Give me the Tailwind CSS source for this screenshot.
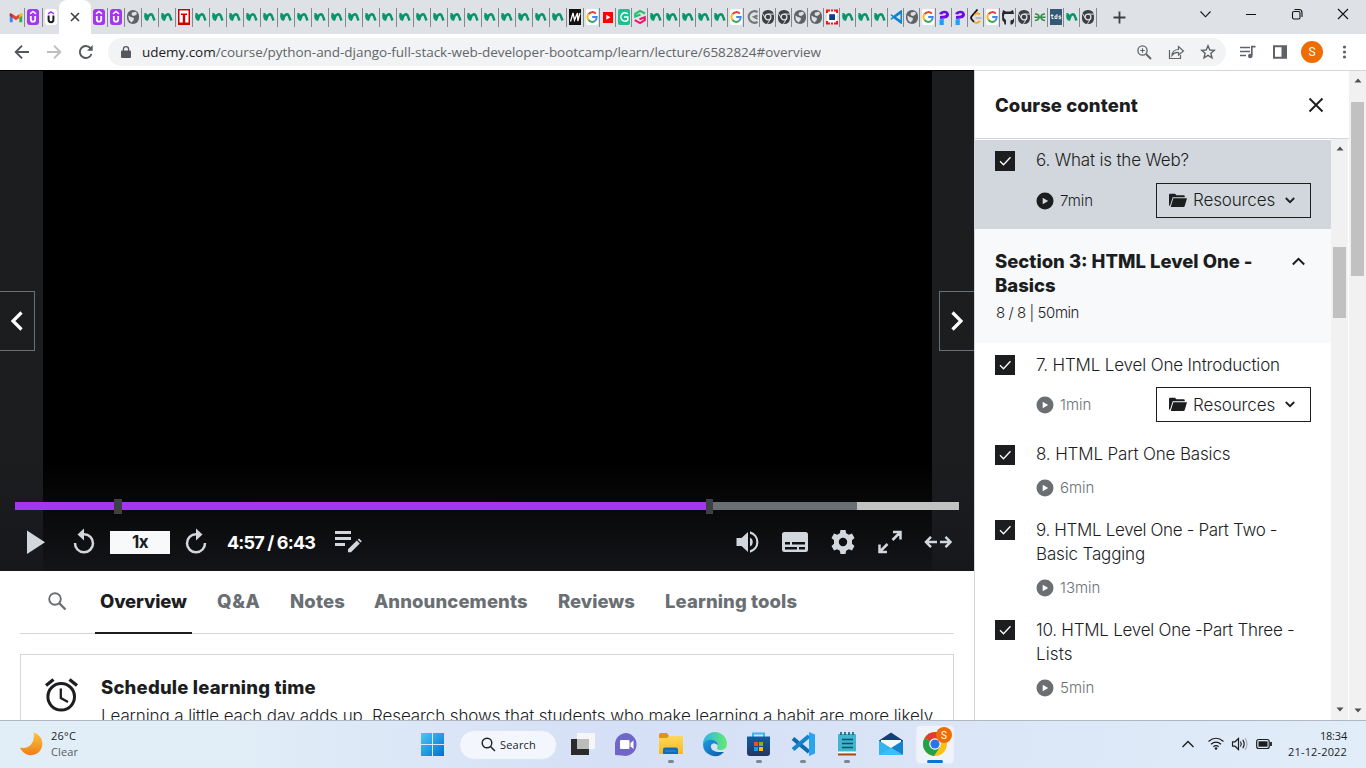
<!DOCTYPE html>
<html lang="en">
<head>
<meta charset="utf-8">
<title>Python and Django Full Stack Web Developer Bootcamp</title>
<script src="https://cdn.jsdelivr.net/npm/@tailwindcss/browser@4"></script>
</head>
<body class="w-[1366px] h-[768px] overflow-hidden bg-white font-['Inter','Liberation_Sans',sans-serif] text-[#1c1d1f]">

<svg class="hidden">
  <defs>
    <symbol id="n" viewBox="0 0 12 16"><path d="M.5 5.500Q1.500 5 2.300 6 2.800 7.500 3.500 9 5 5.500 6.800 5.300 8.500 5.200 9.300 8.500L10.500 11.500" fill="none" stroke="#059669" stroke-width="2.400"/><path d="M1 6Q1 11 3.300 10.800L4.500 8" fill="none" stroke="#059669" stroke-width="1.800"/></symbol>
    <symbol id="gm" viewBox="0 0 14 16"><path d="M.8 13.2V4.5L3.7 6.600V13.200z" fill="#4285f4"/><path d="M10.300 13.200V6.600L13.200 4.500V13.200z" fill="#34a853"/><path d="M.8 4.200 3.700 5V9L.8 6.800z" fill="#c5221f"/><path d="M3.500 4.900 7 7.500 10.500 4.900V8.700L7 11.300 3.500 8.700z" fill="#ea4335"/><path d="M10.300 5 13.200 4.200V6.800L10.300 9z" fill="#fbbc04"/></symbol>
    <symbol id="ud" viewBox="0 0 12 16"><rect width="12" height="16" rx="3" fill="#a435f0"/><path d="M3 4.800 6 2.500 9 4.800" fill="none" stroke="#fff" stroke-width="1.500"/><path d="M3.800 7V10.500A2.200 2.200 0 0 0 8.200 10.500V7" fill="none" stroke="#fff" stroke-width="1.800"/></symbol>
    <symbol id="uw" viewBox="0 0 12 16"><rect width="12" height="16" rx="3" fill="#fff"/><path d="M3 4.800 6 2.800 9 4.800" fill="none" stroke="#a435f0" stroke-width="1.400"/><path d="M3.600 6.500V10.800A2.400 2.400 0 0 0 8.400 10.800V6.500" fill="none" stroke="#1c1d1f" stroke-width="2"/></symbol>
    <symbol id="gl" viewBox="0 0 12 16"><rect y="1" width="12" height="14" rx="6" fill="#5f6368"/><path d="M5 3.500 9 2.800 10 5 8 6.500 6 7 4.500 5.500zM1.200 6.500 4 8 7 9 6.500 11.500 4.500 13.500 2 11zM8.500 9.500 11 8.500" fill="#dee1e6"/></symbol>
    <symbol id="t" viewBox="0 0 12 16"><path d="M0 0H12V16H0z" fill="#c00"/><path d="M1.500 1.500H10.500V4.500H1.500zM1.500 6H4.800V13.500H1.500zM7.200 6H10.500V13.500H7.200zM1.500 4.500H3V6H1.500zM9 4.500H10.500V6H9z" fill="#fff"/></symbol>
    <symbol id="m" viewBox="0 0 12 16"><path d="M0 0H12V16H0z" fill="#12100e"/><path d="M1.500 12.500 4 4 5.500 11 8.500 4 8.800 12 11 4" fill="none" stroke="#fff" stroke-width="1.300"/></symbol>
    <symbol id="g" viewBox="0 0 12 16"><rect width="12" height="16" rx="2" fill="#fff"/><g fill="none" stroke-width="2"><path d="M9.800 4.700A4.800 5 0 0 0 2.400 5.200" stroke="#ea4335"/><path d="M2.400 5.200A5 5 0 0 0 2.400 10.800" stroke="#fbbc04"/><path d="M2.400 10.800A4.700 5 0 0 0 9.200 11.800" stroke="#34a853"/><path d="M9.200 11.800A5 5 0 0 0 10.700 8H6.200" stroke="#4285f4"/></g></symbol>
    <symbol id="yt" viewBox="0 0 12 16"><path d="M1 3H11V14H1z" fill="#f00"/><path d="M4.300 5.800 8.500 8.300 4.300 10.800z" fill="#fff"/></symbol>
    <symbol id="gt" viewBox="0 0 12 16"><rect width="12" height="16" rx="2" fill="#1fbf92"/><path d="M9.800 5A4 4.300 0 1 0 9.800 11V8H6" fill="none" stroke="#fff" stroke-width="1.500"/></symbol>
    <symbol id="pk" viewBox="0 0 12 16"><path d="M11 4.500 6 1.800 1.200 4.800V7.500L6.500 5.500" fill="none" stroke="#21c063" stroke-width="2"/><path d="M.8 11.200 6 14.200 10.800 11.200V8.200L5.500 10.300" fill="none" stroke="#f0146e" stroke-width="2"/></symbol>
    <symbol id="cg" viewBox="0 0 12 16"><path d="M11.500 3A5.800 5.800 0 1 0 11.500 13" fill="none" stroke="#777" stroke-width="2.200"/><path d="M11.500 6.500 8 8 11.500 10" fill="none" stroke="#777" stroke-width="2"/></symbol>
    <symbol id="cr" viewBox="0 0 12 16"><rect y="1" width="12" height="14" rx="5.500" fill="#3c4043"/><circle cx="6" cy="8" r="2.900" fill="none" stroke="#dee1e6" stroke-width="1.300"/><path d="M6 5.100H12M3.400 9.500.5 4.500M8.500 9.500 5.500 14.800" stroke="#dee1e6"/></symbol>
    <symbol id="rq" viewBox="0 0 12 16"><path d="M1 1H11V15H1z" fill="#fff"/><path d="M1 4V1.500H4M5 1.500H7M8 1.500H11V4M1 12V14.500H4M5 14.500H7M8 14.500H11V12" fill="none" stroke="#f11" stroke-width="2"/><path d="M3.200 5.200H9V11H3.200z" fill="#0b3d91"/></symbol>
    <symbol id="vs" viewBox="0 0 12 16"><path d="M10.500 1.500 12 1V15L10.500 14.500 3.500 9.300 1.500 10.800.3 10 2.500 8 .3 6 1.500 5.200 3.500 6.700zM10.500 5 6 8 10.500 11z" fill="#0a84d0" fill-rule="evenodd"/></symbol>
    <symbol id="p" viewBox="0 0 12 16"><path d="M1 5C3 .5 11 .5 11 5.500 11 9 7.500 9.500 6 9.500L2 10V7C6 6.500 8 6.500 8 5.200 8 3.500 5 4 4 5.500z" fill="#6d0be0"/><path d="M1.500 10.500C4 10.500 5.800 9 5.800 9V16H1.500z" fill="#1ca0ff"/></symbol>
    <symbol id="lc" viewBox="0 0 12 16"><path d="M7.500.5 1.500 7.500Q.5 9 1.800 10.500L4 12.800" fill="none" stroke="#111" stroke-width="1.800"/><path d="M9.800 5.500Q7 3 4.500 6M4 12.800Q7 15.500 10 11.800" fill="none" stroke="#ffa116" stroke-width="1.800"/><path d="M5.500 9H11.500" stroke="#b3b3b3" stroke-width="1.600"/></symbol>
    <symbol id="gh" viewBox="0 0 12 16"><path d="M1 1 4 2.500H8L11 1 12 5V9Q11.500 11 8.500 11.500V15.500H10Q12 14 12 12V5L9.500 5H2.500Q1.500 7 2 8.500 2.500 10 4 11V15.500H2.500L2 13 .3 11.500 0 5z" fill="#24292f"/></symbol>
    <symbol id="gf" viewBox="0 0 12 16"><path d="M1 5Q5 5 5 8T1 11.500M11 5Q7 5 7 8T11 11.500M.5 8.200H11.500" fill="none" stroke="#2f8d46" stroke-width="1.500"/></symbol>
    <symbol id="td" viewBox="0 0 12 16"><path d="M0 0H12V16H0z" fill="#355876"/><path d="M2 5V9.500H3.500M.8 6.500H3.500M7 5V9.500H5V7H7M11 7H9V8.200H10.800V9.700H8.600" fill="none" stroke="#fff" stroke-width=".9"/></symbol>
    <symbol id="play" viewBox="0 0 18 18"><circle cx="9" cy="9" r="8.500" fill="currentColor"/><path d="M6.700 5.800 12.200 9 6.700 12.200z" class="fill-[var(--k,#fff)]"/></symbol>
    <symbol id="chk" viewBox="0 0 20 20"><path d="M0 0H20V20H0z" fill="#1c1d1f"/><path d="M5 10.300 8.500 13.700 15.500 6.300" fill="none" stroke="#fff" stroke-width="1.300"/></symbol>
    <symbol id="fold" viewBox="0 0 18 15"><path d="M0 13V2Q0 .8 1.200.8H6L7.500 2.300H14.500Q15.800 2.300 15.800 3.500V4.300H3.700L1.200 12z" fill="#1c1d1f"/><path d="M4.300 5.300H18L15.800 12.800Q15.500 14 14.300 14H1.700z" fill="#1c1d1f"/></symbol>
    <symbol id="dn" viewBox="0 0 10 7"><path d="M.8 1 5 5.200 9.200 1" fill="none" stroke="#1c1d1f" stroke-width="1.800"/></symbol>
  </defs>
</svg>

<div class="w-[1366px] h-[768px] flex flex-col">

<!-- Tab strip -->
<header class="h-[34px] shrink-0 bg-[#dee1e6] flex">
  <div class="flex w-[59px] pl-[8px]" id="tabs-a"></div>
  <div class="w-[32px] h-[34px] bg-white rounded-t-[8px] flex items-center justify-center">
    <svg class="w-[10px] h-[10px]" viewBox="0 0 10 10"><path d="M1 1 9 9M9 1 1 9" stroke="#3c4043" stroke-width="1.600"/></svg>
  </div>
  <div class="flex w-[1006px]" id="tabs-b"></div>
  <svg class="w-[13px] h-[13px] mt-[11px] ml-[16px]" viewBox="0 0 13 13"><path d="M6.500.5V12.500M.5 6.500H12.500" stroke="#3c4043" stroke-width="1.800"/></svg>
  <svg class="w-[150px] h-[34px] ml-[73px]" viewBox="0 0 150 34" fill="none" stroke="#111" stroke-width="1.100"><path d="M1.500 11.500 6.500 16.800 11.500 11.500M47 14.500H57M95.500 9.500H100Q103 9.500 103 12.500V17"/><rect x="93.500" y="11.500" width="7.500" height="7.500" rx="1.500"/><path d="M139 9 149 19M149 9 139 19"/></svg>
</header>

<!-- Address bar -->
<div class="h-[36px] shrink-0 bg-white flex items-center">
  <svg class="w-[108px] h-[36px]" viewBox="0 0 108 36" fill="none" stroke-width="1.900"><path d="M29 18H16M22 11.700 15.700 18 22 24.300" stroke="#54585d"/><path d="M47 18H60M54 11.700 60.300 18 54 24.300" stroke="#bcbec2"/><path d="M91.500 20A6 6 0 1 1 90.500 14.200" stroke="#54585d"/><path d="M92.700 11V16.700H87z" fill="#54585d"/></svg>
  <div class="w-[1118px] h-[28px] rounded-full bg-[#f1f3f4] flex items-center pl-[13px]">
    <svg class="w-[10px] h-[13px]" viewBox="0 0 10 13"><path d="M1 4.500H9Q10 4.500 10 5.500V11Q10 12 9 12H1Q0 12 0 11V5.500Q0 4.500 1 4.500z" fill="#54585d"/><path d="M2.400 5V3.200A2.600 2.500 0 0 1 7.600 3.200V5" fill="none" stroke="#54585d" stroke-width="1.300"/></svg>
    <div class="ml-[11px] w-[994px] font-['Open_Sans',sans-serif] text-[13.5px] tracking-[-0.043px] text-[#62666b] whitespace-nowrap"><span class="text-[#202124]">udemy.com</span>/course/python-and-django-full-stack-web-developer-bootcamp/learn/lecture/6582824#overview</div>
    <svg class="w-[80px] h-[28px]" viewBox="0 0 80 28" fill="none" stroke="#5f6368" stroke-width="1.300"><circle cx="6.500" cy="12.500" r="4.600"/><path d="M10 16 15 21" stroke-width="1.800"/><path d="M4.300 12.500H8.700M6.500 10.300V14.700" stroke-width="1.100"/><path d="M33.500 12V20.500H44.500V17M36 17.500Q36.500 11.500 42.500 11.500V8.500L47.500 13 42.500 17V14.500Q38.500 14 36 17.500z" stroke-width="1.200"/><path d="M72 7.800 73.800 12 78.300 12.300 74.900 15.200 76 19.800 72 17.400 68 19.800 69.100 15.200 65.700 12.300 70.200 12z" stroke-width="1.400"/></svg>
  </div>
  <svg class="w-[62px] h-[36px] ml-[12px]" viewBox="0 0 62 36"><path d="M2 13.500H12M2 17.500H12M2 21.500H8" stroke="#5f6368" stroke-width="1.700"/><path d="M13.800 21.500V12.700H17.500" fill="none" stroke="#5f6368" stroke-width="1.700"/><circle cx="12.300" cy="22" r="2.300" fill="#5f6368"/><path d="M35 11.200H49V24.800H35zM37 13.200V22.800H43.500V13.200z" fill="#5f6368" fill-rule="evenodd"/></svg>
  <div class="w-[22px] h-[22px] rounded-full bg-[#ef6c00] text-white text-[12px] flex items-center justify-center font-[Roboto,sans-serif] ml-[1px]">S</div>
  <svg class="w-[5px] h-[14px] ml-[19px]" viewBox="0 0 5 14" fill="#5f6368"><circle cx="2.500" cy="2" r="1.600"/><circle cx="2.500" cy="7" r="1.600"/><circle cx="2.500" cy="12" r="1.600"/></svg>
</div>

<!-- Page -->
<main class="h-[650px] shrink-0 flex overflow-hidden">
  <section class="w-[974px] shrink-0 flex flex-col">
    <!-- Player -->
    <div class="h-[501px] shrink-0 bg-[#1c1d1f] border-t border-black px-[43px] relative">
      <div class="h-full w-[889px] bg-black"></div>
      <div class="absolute inset-x-0 bottom-0 h-[110px] bg-linear-to-b from-[#16171b]/0 to-[#16171b]/90"></div>
      <div class="absolute left-0 top-[220px] w-[35px] h-[60px] bg-[#1c1d1f] border border-l-0 border-[#6a6f73] flex items-center justify-center"><svg class="w-[12px] h-[20px]" viewBox="0 0 12 20"><path d="M10.500 1.500 2 10 10.500 18.500" fill="none" stroke="#fff" stroke-width="3.200"/></svg></div>
      <div class="absolute right-0 top-[220px] w-[35px] h-[60px] bg-[#1c1d1f] border border-r-0 border-[#6a6f73] flex items-center justify-center"><svg class="w-[12px] h-[20px]" viewBox="0 0 12 20"><path d="M1.500 1.500 10 10 1.500 18.500" fill="none" stroke="#fff" stroke-width="3.200"/></svg></div>
      <div class="absolute left-[15px] top-[428px] w-[944px] h-[15px] flex">
        <div class="w-[99px] h-[8px] mt-[3px] bg-[#a435f0]"></div><div class="w-[8px] h-[15px] bg-[#3e4143]"></div><div class="w-[584px] h-[8px] mt-[3px] bg-[#a435f0]"></div><div class="w-[7px] h-[15px] bg-[#3e4143]"></div><div class="w-[144px] h-[8px] mt-[3px] bg-[#6a6f73]"></div><div class="w-[102px] h-[8px] mt-[3px] bg-[#c1c2c2]"></div>
      </div>
      <div class="absolute left-0 bottom-0 w-full h-[58px] flex items-center text-[#d1d7dc]">
        <svg class="w-[110px] h-[58px]" viewBox="0 0 110 58"><path d="M27 17.500V41L45 29.200z" fill="currentColor"/><path d="M75 30A9 9 0 1 0 84 21.300H81" fill="none" stroke="currentColor" stroke-width="2.500"/><path d="M77.500 21.500 84 15.500V27.500z" fill="currentColor"/></svg>
        <div class="w-[60px] h-[23px] bg-[#f7f9fa] text-[#1c1d1f] font-bold text-[17px] tracking-[-0.6px] leading-[23px] text-center">1x</div>
        <svg class="w-[57px] h-[58px]" viewBox="0 0 57 58"><path d="M35 30A9 9 0 1 1 26 21.300H29" fill="none" stroke="currentColor" stroke-width="2.500"/><path d="M32.500 21.500 26 15.500V27.500z" fill="currentColor"/></svg>
        <div class="w-[107px] text-white font-bold text-[18px] tracking-[-0.83px] whitespace-nowrap pt-px">4:57 / 6:43</div>
        <svg class="w-[28px] h-[22px]" viewBox="0 0 28 22" fill="currentColor"><path d="M1 0H17V3H1zM1 6H17V9H1zM1 12H11V15H1zM14 18.300 22.800 9.500 25.800 12.500 17 21.300H14zM23.700 8.700 25 7.500 27.800 10.300 26.600 11.500z"/></svg>
        <svg class="w-[612px] h-[58px]" viewBox="362 0 612 58" fill="currentColor"><path d="M736.500 25H741.500L748 19V39L741.500 33H736.500zM750 24.500A5 5 0 0 1 750 33.500zM750 18.300A11 11 0 0 1 750 39.700V37.200A8.500 8.500 0 0 0 750 20.800z"/><path fill-rule="evenodd" d="M784.500 19H805.500Q808 19 808 21.500V36.500Q808 39 805.500 39H784.500Q782 39 782 36.500V21.500Q782 19 784.500 19zM785 29V31.500H790V29zM792 29V31.500H805V29zM785 34V36.500H797V34zM799 34V36.500H805V34z"/><path fill-rule="evenodd" d="M840.500 17H845.500L846.200 20.300 848.800 21.700 852 20.600 854.500 25 852 27.300V30.700L854.500 33 852 37.400 848.800 36.300 846.200 37.700 845.500 41H840.500L839.800 37.700 837.200 36.300 834 37.400 831.500 33 834 30.700V27.300L831.500 25 834 20.600 837.200 21.700 839.800 20.300zM843 24.800A4.200 4.200 0 1 0 843 33.200 4.200 4.200 0 1 0 843 24.800z"/><g fill="none" stroke="currentColor" stroke-width="2.500"><path d="M893 19H900.500V26.500M900 19.500 892.500 27M879.500 31.500V39H887M880 38.500 887.500 31M937 29H927M931 23.800 926 29 931 34.200M940 29H950M945.500 23.800 950.500 29 945.500 34.200"/></g></svg>
      </div>
    </div>
    <!-- Tabs -->
    <nav class="mx-[20px] h-[63px] shrink-0 border-b border-[#d1d7dc] flex font-extrabold text-[18.5px] leading-[61px] text-[#6a6f73] whitespace-nowrap">
      <div class="w-[75px] pl-[27px] pt-[20px]"><svg class="w-[20px] h-[20px]" viewBox="0 0 20 20"><circle cx="8" cy="8" r="5.800" fill="none" stroke="#6a6f73" stroke-width="1.900"/><path d="M12 12 18.500 18.500" stroke="#6a6f73" stroke-width="2.400"/></svg></div>
      <div class="w-[97px] h-[63px] border-b-2 border-[#1c1d1f] text-[#1c1d1f] pl-[5px] tracking-[-0.15px]">Overview</div>
      <div class="w-[73px] pl-[25px] tracking-[0.7px]">Q&amp;A</div>
      <div class="w-[85px] pl-[25px] tracking-[0.15px]">Notes</div>
      <div class="w-[183px] pl-[24px] tracking-[0.1px]">Announcements</div>
      <div class="w-[107px] pl-[25px]">Reviews</div>
      <div class="pl-[25px] tracking-[0.1px]">Learning tools</div>
    </nav>
    <div class="mx-[20px] mt-[20px] h-[150px] border border-[#d1d7dc] flex pl-[24px] pt-[20px] whitespace-nowrap">
      <svg class="w-[33px] h-[34px] mt-[3px] shrink-0" viewBox="0 0 33 34" fill="none" stroke="#1c1d1f"><circle cx="16.200" cy="18.800" r="13.300" stroke-width="3"/><path d="M15.800 10.500V20L23 24" stroke-width="2.300"/><path d="M1 7.500 8.500 1.500M24.500 1.500 32 7.500" stroke-width="3.300"/></svg>
      <div class="ml-[23px]">
        <div class="font-extrabold text-[18.5px] leading-[24px] tracking-[0.2px]">Schedule learning time</div>
        <div class="text-[17px] leading-[24px] mt-[5px] font-light tracking-[-0.11px]">Learning a little each day adds up. Research shows that students who make learning a habit are more likely</div>
      </div>
    </div>
  </section>

  <!-- Course content -->
  <aside class="w-[375px] shrink-0 border-l border-t border-[#d1d7dc] flex flex-col whitespace-nowrap">
    <div class="h-[68px] shrink-0 border-b border-[#d1d7dc] flex items-center justify-between pl-[20px] pr-[25px] pt-px font-extrabold text-[18.5px]"><span class="tracking-[0.1px] pt-px">Course content</span><svg class="w-[16px] h-[16px] mb-px" viewBox="0 0 16 16"><path d="M1.500 1.500 14.500 14.500M14.500 1.500 1.500 14.500" stroke="#1c1d1f" stroke-width="1.900"/></svg></div>
    <div class="flex h-[581px]">
      <div class="w-[356px] text-[17px] leading-[24px] font-light">
        <div class="h-[89px] mt-px bg-[#d1d7dc] flex pl-[20px] pt-[8px] [--k:#d1d7dc]">
          <svg class="w-[20px] h-[20px] mt-[3px] mr-[20px]"><use href="#chk"/></svg>
          <div class="w-[276px]"><div class="tracking-[-0.18px] pl-px">6. What is the Web?</div>
            <div class="flex items-center mt-[11px]"><svg class="w-[18px] h-[18px] ml-px"><use href="#play"/></svg><span class="ml-[6px] text-[15px]">7min</span>
              <div class="ml-auto w-[155px] h-[35px] border border-[#1c1d1f] flex items-center pl-[12px]"><svg class="w-[18px] h-[15px]"><use href="#fold"/></svg><span class="ml-[6px] w-[92px] tracking-[-0.13px] pb-px">Resources</span><svg class="w-[10px] h-[7px]"><use href="#dn"/></svg></div></div></div>
        </div>
        <div class="h-[114px] bg-[#f7f9fa] pl-[20px] pr-[26px] pt-[20px] flex justify-between">
          <div><div class="font-extrabold text-[18.5px]">Section 3: HTML Level One -</div><div class="font-extrabold text-[18.5px]">Basics</div><div class="text-[15px] leading-[20px] mt-[6px] tracking-[-0.44px] pl-px">8 / 8 | 50min</div></div>
          <svg class="w-[13px] h-[9px] mt-[8px]" viewBox="0 0 13 9"><path d="M.8 7.500 6.500 1.800 12.200 7.500" fill="none" stroke="#1c1d1f" stroke-width="2"/></svg>
        </div>
        <div class="h-[90px] flex pl-[20px] pt-[10px]">
          <svg class="w-[20px] h-[20px] mt-[2px] mr-[20px]"><use href="#chk"/></svg>
          <div class="w-[276px]"><div class="tracking-[-0.16px] pl-px">7. HTML Level One Introduction</div>
            <div class="flex items-center mt-[10px]"><svg class="w-[18px] h-[18px] ml-px text-[#6a6f73]"><use href="#play"/></svg><span class="ml-[6px] text-[15px] text-[#6a6f73]">1min</span>
              <div class="ml-auto w-[155px] h-[35px] border border-[#1c1d1f] flex items-center pl-[12px]"><svg class="w-[18px] h-[15px]"><use href="#fold"/></svg><span class="ml-[6px] w-[92px] tracking-[-0.13px]">Resources</span><svg class="w-[10px] h-[7px]"><use href="#dn"/></svg></div></div></div>
        </div>
        <div class="h-[76px] flex pl-[20px] pt-[9px]">
          <svg class="w-[20px] h-[20px] mt-[3px] mr-[20px]"><use href="#chk"/></svg>
          <div><div class="tracking-[-0.15px] pl-px">8. HTML Part One Basics</div><div class="flex items-center mt-[10px]"><svg class="w-[18px] h-[18px] ml-px text-[#6a6f73]"><use href="#play"/></svg><span class="ml-[6px] text-[15px] text-[#6a6f73]">6min</span></div></div>
        </div>
        <div class="h-[100px] flex pl-[20px] pt-[9px]">
          <svg class="w-[20px] h-[20px] mt-[2px] mr-[20px]"><use href="#chk"/></svg>
          <div><div class="tracking-[-0.34px] pl-px">9. HTML Level One - Part Two -</div><div class="tracking-[-0.15px] pl-px">Basic Tagging</div><div class="flex items-center mt-[10px]"><svg class="w-[18px] h-[18px] ml-px text-[#6a6f73]"><use href="#play"/></svg><span class="ml-[6px] text-[15px] text-[#6a6f73]">13min</span></div></div>
        </div>
        <div class="h-[100px] flex pl-[20px] pt-[9px]">
          <svg class="w-[20px] h-[20px] mt-[2px] mr-[20px]"><use href="#chk"/></svg>
          <div><div class="tracking-[-0.25px] pl-px">10. HTML Level One -Part Three -</div><div class="tracking-[0.15px] pl-px">Lists</div><div class="flex items-center mt-[10px]"><svg class="w-[18px] h-[18px] ml-px text-[#6a6f73]"><use href="#play"/></svg><span class="ml-[6px] text-[15px] text-[#6a6f73]">5min</span></div></div>
        </div>
      </div>
      <div class="w-[17px] bg-[#f1f1f1] flex flex-col items-center">
        <svg class="w-[8px] h-[5px] mt-[7px]" viewBox="0 0 8 5"><path d="M.5 4.500 4 .5 7.500 4.500z" fill="#505050"/></svg>
        <div class="w-[13px] h-[71px] bg-[#c1c1c1] mt-[96px]"></div>
        <svg class="w-[8px] h-[5px] mt-auto mb-[8px]" viewBox="0 0 8 5"><path d="M.5.5 4 4.500 7.500.5z" fill="#505050"/></svg>
      </div>
    </div>
  </aside>
  <div class="w-[17px] bg-[#f1f1f1] border-t border-[#d1d7dc] flex flex-col items-center">
    <svg class="w-[8px] h-[5px] mt-[7px]" viewBox="0 0 8 5"><path d="M.5 4.500 4 .5 7.500 4.500z" fill="#505050"/></svg>
    <div class="w-[13px] h-[174px] bg-[#c1c1c1] mt-[19px]"></div>
    <svg class="w-[8px] h-[5px] mt-auto mb-[7px]" viewBox="0 0 8 5"><path d="M.5.5 4 4.500 7.500.5z" fill="#505050"/></svg>
  </div>
</main>

<!-- Taskbar -->
<footer class="h-[48px] shrink-0 border-t border-[#b0b6c2] bg-linear-to-r from-[#e2eef7] from-15% via-[#d5dff6] via-45% to-[#e1edf8] flex items-center font-['Open_Sans',sans-serif] text-[11px] leading-[16px] whitespace-nowrap">
  <svg class="w-[24px] h-[24px] ml-[19px] mb-[2px] shrink-0" viewBox="0 0 24 24"><defs><linearGradient id="mn" x2="0" y2="1"><stop stop-color="#f8c63d"/><stop offset="1" stop-color="#f07d1a"/></linearGradient></defs><path d="M14.500 0.500A11.500 11.500 0 1 1 1 15.500Q8 17 12 12.500T14.500.5z" fill="url(#mn)"/></svg>
  <div class="ml-[8px] w-[360px] shrink-0 pb-px"><div class="tracking-[0.2px]">26°C</div><div class="text-[#565b63] tracking-[0.1px]">Clear</div></div>
  <svg class="w-[23px] h-[23px] ml-[10px] shrink-0" viewBox="0 0 23 23"><defs><linearGradient id="wn" x2="1" y2="1"><stop stop-color="#4cc8f5"/><stop offset="1" stop-color="#006fd0"/></linearGradient></defs><path d="M0 0H11V11H0zM12 0H23V11H12zM0 12H11V23H0zM12 12H23V23H12z" fill="url(#wn)"/></svg>
  <div class="ml-[15px] w-[98px] h-[30px] shrink-0 rounded-full bg-[#f3f7fd] border border-[#dde4f2] flex items-center pl-[21px]"><svg class="w-[15px] h-[15px]" viewBox="0 0 15 15"><circle cx="6" cy="6" r="4.800" fill="none" stroke="#222" stroke-width="1.400"/><path d="M9.500 9.500 14 14" stroke="#222" stroke-width="1.500"/></svg><span class="ml-[4px] tracking-[0.2px]">Search</span></div>
  <svg class="w-[400px] h-[47px] shrink-0" viewBox="557 0 400 47">
    <defs><linearGradient id="ed" x2="1" y2="1"><stop stop-color="#1b9de2"/><stop offset="1" stop-color="#0c59a4"/></linearGradient><linearGradient id="ed2" x2="1" y2="0"><stop stop-color="#2ab4e8"/><stop offset="1" stop-color="#66eb6e"/></linearGradient><linearGradient id="fd" x2="0" y2="1"><stop stop-color="#ffd75e"/><stop offset="1" stop-color="#fbb917"/></linearGradient><linearGradient id="ms" x2="0" y2="1"><stop stop-color="#0f5fa6"/><stop offset="1" stop-color="#25355f"/></linearGradient></defs>
    <rect x="571" y="18" width="18" height="16" fill="#2b2b2b"/><rect x="577" y="12" width="18" height="16" fill="#f6f6f6"/><rect x="577" y="18" width="12" height="10" fill="#bcbcbc"/>
    <path d="M626.500 12A11.500 11.500 0 1 1 622 34.500L615 34V24A11.500 11.500 0 0 1 626.500 12z" fill="#6e66c8"/><rect x="620" y="19" width="9.500" height="9" rx="1" fill="#fff"/><path d="M630.500 22 633.500 19.500V28L630.500 25.500z" fill="#fff"/>
    <path d="M659 14Q659 12 661 12H667L669 15H683V18H659z" fill="#d99a10"/><path d="M659 17H667L669 15H683V33H659z" fill="url(#fd)"/><path d="M663 33V28.500Q663 26.500 665 26.500H676Q678 26.500 678 28.500V33z" fill="#0f6cbd"/><path d="M665 30H676" stroke="#2a94e8"/>
    <path d="M703 23A12 12 0 0 1 727 23Q727 29 720 29 716 29 717.500 26 718.500 22 713 20 706 18.500 703 23z" fill="url(#ed2)"/><path d="M703 23Q706 17.500 713 19 718 21 717.500 24 714 20.500 711 24 709.500 32 724 31A12 12 0 0 1 703 23z" fill="url(#ed)"/>
    <path d="M753 16V12.500H764V16" fill="none" stroke="#38b6f1" stroke-width="2"/><path d="M747 15.500H770V32Q770 35 767 35H750Q747 35 747 32z" fill="url(#ms)"/><path d="M754 21H758V25H754z" fill="#f25022"/><path d="M759 21H763V25H759z" fill="#7fba00"/><path d="M754 26H758V30H754z" fill="#00a4ef"/><path d="M759 26H763V30H759z" fill="#ffb900"/>
    <path d="M793 17.500 809 31" stroke="#0b6bb0" stroke-width="4"/><path d="M793 28.500 809 15" stroke="#1683cc" stroke-width="4"/><path d="M809 11 815 13.500V32.500L809 35z" fill="#2ba4f0"/>
    <rect x="838" y="13" width="18" height="19" rx="1" fill="#3fb5cf"/><path d="M838 32.500H856V34.500H838z" fill="#a34d12"/><path d="M838 30.500H856V32H838z" fill="#fff"/><path d="M841 11V14M845 11V14M849 11V14M853 11V14" stroke="#0d5c73" stroke-width="1.600"/><path d="M842 18.500H853M842 22.500H853M842 26.500H853" stroke="#0b5266" stroke-width="1.600"/>
    <path d="M879 19.500 891 11.500 903 19.500V22H879z" fill="#123f7b"/><path d="M881 19H901V25L891 30 881 25z" fill="#f7f7f7"/><path d="M879 19.500 891 27 903 34H879z" fill="#32b5ee"/><path d="M903 19.500 891 27 903 34z" fill="#1283ce"/><path d="M879 34H903L891 27z" fill="#37c0f4"/>
    <rect x="916" y="4.500" width="38" height="38" rx="4" fill="#eff3fb" stroke="#e3e8f3"/><circle cx="935" cy="23" r="12" fill="#fbc116"/><path d="M935 23 924.600 17A12 12 0 0 1 945.400 17z" fill="#e33b2e"/><path d="M924.600 17A12 12 0 0 0 934 35L940 26 935 23z" fill="#22a148"/><circle cx="935" cy="23" r="5.800" fill="#fff"/><circle cx="935" cy="23" r="4.600" fill="#2b73e8"/><circle cx="944" cy="14" r="8" fill="#ef6c00"/><text x="944" y="18" font-size="10" text-anchor="middle" fill="#fff" font-family="Roboto">S</text>
    <g fill="#7e8492"><rect x="668" y="39" width="6" height="3" rx="1.500"/><rect x="756" y="39" width="6" height="3" rx="1.500"/><rect x="800" y="39" width="6" height="3" rx="1.500"/><rect x="844" y="39" width="6" height="3" rx="1.500"/></g><rect x="927" y="39" width="16" height="3" rx="1.500" fill="#0a74d2"/>
  </svg>
  <svg class="w-[100px] h-[47px] ml-[223px] shrink-0" viewBox="1180 0 100 47" fill="none" stroke="#1c1d1f" stroke-width="1.200"><path d="M1182.500 26 1188 20.500 1193.500 26" stroke-width="1.400"/><path d="M1208.500 20.500Q1216 14 1223.500 20.500M1211 23.300Q1216 19 1221 23.300M1213.300 25.800Q1216 23.500 1218.700 25.800"/><circle cx="1216" cy="27.500" r="1.300" fill="#1c1d1f" stroke="none"/><path d="M1232.500 20.800H1235L1238.500 17.500V28.500L1235 25.200H1232.500zM1240.500 20.500Q1242 23 1240.500 25.500M1242.800 18.800Q1245.500 23 1242.800 27.200"/><path d="M1245 17Q1249 23 1245 29" stroke="#aab"/><rect x="1256.700" y="18.500" width="12.500" height="9" rx="2"/><rect x="1258.500" y="20.300" width="9" height="5.400" fill="#1c1d1f" stroke="none"/><path d="M1271 21V25" stroke-width="1.800"/></svg>
  <div class="ml-auto mr-[19px] pb-px text-right"><div class="tracking-[-0.2px]">18:34</div><div class="tracking-[0.15px]">21-12-2022</div></div>
</footer>
</div>

<script>
  // Pinned and background tabs: one favicon per tab, narrow tabs first.
  const cell = (id, w) => `<div class="relative flex items-center justify-center h-[34px] pr-px shrink-0" style="width:${w}px"><svg class="shrink-0" style="width:${id === 'gm' ? 14 : 12}px;height:16px"><use href="#${id}"/></svg><span class="absolute right-0 top-[8px] w-px h-[19px] bg-[#85898e]"></span></div>`;
  document.getElementById('tabs-a').innerHTML = ['gm', 'ud'].map(i => cell(i, 17.3)).join('') + '<div class="flex items-center w-[16px] pl-[2px]"><svg style="width:12px;height:16px"><use href="#uw"/></svg></div>';
  const wide = ['ud', 'ud', 'gl', 'n', 'n', 't', ...Array(22).fill('n'), 'm'];
  const slim = 'g yt gt pk n n n n n g cg cr cr gl gl rq n n n vs gl g p p lc g gh cr gf td n cr'.split(' ');
  document.getElementById('tabs-b').innerHTML = wide.map(i => cell(i, 17)).join('') + slim.map(i => cell(i, 16.03)).join('');
</script>
</body>
</html>
